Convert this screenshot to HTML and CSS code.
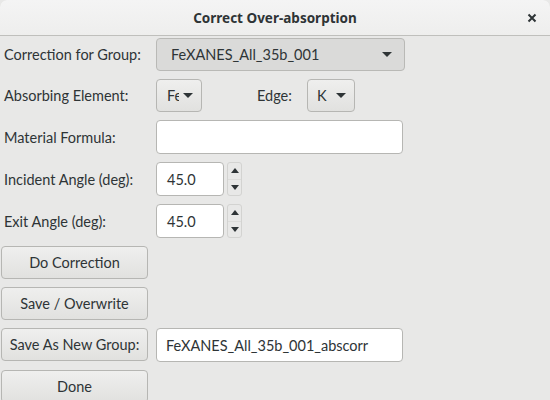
FILE: index.html
```html
<!DOCTYPE html>
<html>
<head>
<meta charset="utf-8">
<link rel="stylesheet" href="styles.css">
</head>
<body>
<div class="window">
  <div class="titlebar">
    <span class="title">Correct Over-absorption</span>
    <span class="close">
      <svg width="10" height="10" viewBox="0 0 10 10"><path d="M1.5 1.5 L8.5 8.5 M8.5 1.5 L1.5 8.5" stroke="#2e3436" stroke-width="2" stroke-linecap="butt"/></svg>
    </span>
  </div>
  <div class="form">
    <div class="label">Correction for Group:</div>
    <div class="combo"><span>FeXANES_All_35b_001</span><i class="tri down"></i></div>

    <div class="label">Absorbing Element:</div>
    <div class="row2">
      <div class="btn small fe"><span class="clip">Fe</span><i class="tri down"></i></div>
      <span class="label edge">Edge:</span>
      <div class="btn small k"><span>K</span><i class="tri down"></i></div>
    </div>

    <div class="label">Material Formula:</div>
    <div class="entry wide"></div>

    <div class="label">Incident Angle (deg):</div>
    <div class="spinrow">
      <div class="entry num">45.0</div>
      <div class="spin"><div class="half"><i class="tri up"></i></div><div class="half"><i class="tri down"></i></div></div>
    </div>

    <div class="label">Exit Angle (deg):</div>
    <div class="spinrow">
      <div class="entry num">45.0</div>
      <div class="spin"><div class="half"><i class="tri up"></i></div><div class="half"><i class="tri down"></i></div></div>
    </div>

    <div class="btn action">Do Correction</div>
    <div></div>

    <div class="btn action">Save / Overwrite</div>
    <div></div>

    <div class="btn action">Save As New Group:</div>
    <div class="entry wide text">FeXANES_All_35b_001_abscorr</div>

    <div class="btn action">Done</div>
    <div></div>
  </div>
</div>
</body>
</html>
```
FILE: styles.css
```css
html, body {
  margin: 0;
  padding: 0;
  background: #e8e8e7;
}
body {
  font-family: Lato, "Noto Sans", sans-serif;
  font-size: 14.5px;
  color: #2e3436;
}
.window {
  width: 550px;
  height: 400px;
  overflow: hidden;
  background: #e8e8e7;
  border-radius: 7px 7px 0 0;
}
.titlebar {
  height: 35px;
  border-bottom: 1px solid #bfbfbc;
  background: linear-gradient(#f4f4f4, #eeeeed);
  border-radius: 7px 7px 0 0;
  display: flex;
  align-items: center;
  justify-content: center;
  position: relative;
}
.title {
  font-family: "Noto Sans", sans-serif;
  font-weight: bold;
  font-size: 13.5px;
  color: #2e3436;
}
.close {
  position: absolute;
  right: 13px;
  top: 13px;
  width: 10px;
  height: 10px;
  display: flex;
}
.form {
  display: grid;
  grid-template-columns: 147px 1fr;
  column-gap: 8px;
  row-gap: 8px;
  padding: 2px 0 0 1px;
}
.label {
  display: flex;
  align-items: center;
  padding-left: 3px;
  white-space: nowrap;
}
.combo {
  height: 31px;
  border: 1px solid #b9b9b6;
  border-radius: 4px;
  background: #dadad9;
  display: flex;
  align-items: center;
  justify-content: space-between;
  padding: 0 12px 0 14px;
  box-sizing: content-box;
  width: 221px;
}
.tri {
  display: inline-block;
  width: 0;
  height: 0;
  border-left: 5px solid transparent;
  border-right: 5px solid transparent;
}
.tri.down { border-top: 5px solid #2e3436; }
.tri.up { border-bottom: 5px solid #2e3436; }
.btn {
  box-sizing: border-box;
  border: 1px solid #b6b6b3;
  border-radius: 4px;
  background: linear-gradient(#efefee, #e1e1df);
  display: flex;
  align-items: center;
  justify-content: center;
  white-space: nowrap;
}
.action {
  height: 33px;
  width: 147px;
}
.row2 {
  display: flex;
  align-items: center;
  height: 33px;
}
.btn.small {
  height: 33px;
  justify-content: flex-start;
}
.btn.fe {
  width: 46px;
  padding-left: 10px;
}
.btn.fe .clip {
  width: 12px;
  overflow: hidden;
  margin-right: 4px;
}
.btn.k {
  width: 48px;
  padding-left: 9px;
}
.btn.k span {
  margin-right: 9px;
}
.edge {
  margin-left: 52px;
  margin-right: 15px;
}
.entry {
  box-sizing: border-box;
  height: 34px;
  border: 1px solid #b6b6b3;
  border-radius: 4px;
  background: #ffffff;
  display: flex;
  align-items: center;
}
.entry.wide {
  width: 247px;
}
.entry.text {
  padding-left: 9px;
}
.spinrow {
  display: flex;
  gap: 3px;
}
.entry.num {
  width: 68px;
  padding-left: 10px;
}
.spin {
  box-sizing: border-box;
  width: 15px;
  height: 34px;
  border: 1px solid #d3d3d1;
  border-radius: 3px;
  display: flex;
  flex-direction: column;
}
.spin .half {
  flex: 1;
  display: flex;
  align-items: center;
  justify-content: center;
}
.spin .half + .half {
  border-top: 1px solid #dcdcda;
}
.spin .tri {
  border-left-width: 4px;
  border-right-width: 4px;
}
```
